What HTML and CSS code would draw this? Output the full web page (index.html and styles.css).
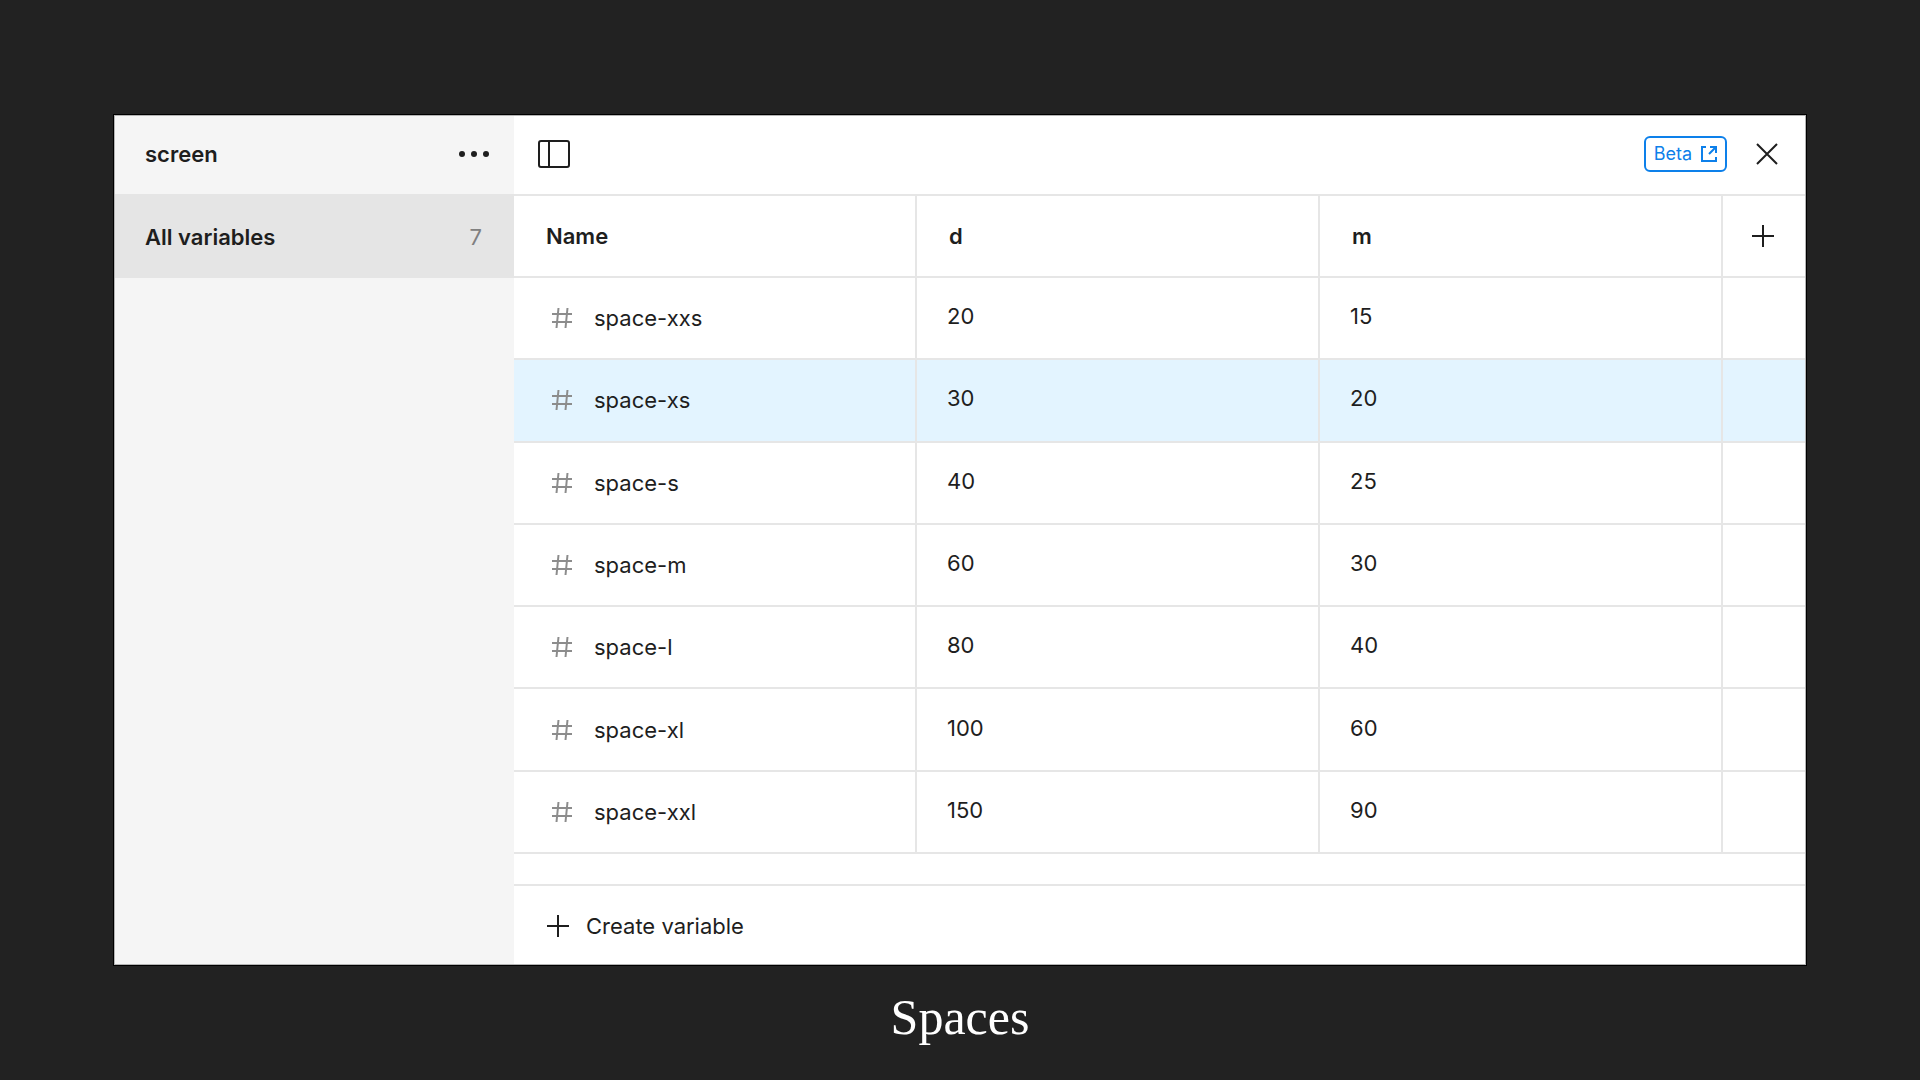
FILE: index.html
```html
<!DOCTYPE html>
<html lang="en">
<head>
<meta charset="utf-8">
<meta name="viewport" content="width=device-width, initial-scale=1">
<title>Spaces</title>
<link rel="stylesheet" href="styles.css">
</head>
<body>
<svg class="sprite" aria-hidden="true">
  <symbol id="hash" viewBox="0 0 20 22"><path d="M6.500 1 4.500 21M15.500 1 13.500 21M0 7H20M0 15H20"/></symbol>
  <symbol id="plus" viewBox="0 0 22 22"><path d="M11 0V22M0 11H22"/></symbol>
</svg>
<figure class="slide">
  <main class="panel">
    <aside class="sidebar">
      <header class="collection">
        <h1 class="title">screen</h1>
        <button class="icon-button" type="button" aria-label="More options">
          <svg class="dots" viewBox="0 0 32 8"><circle cx="4" cy="4" r="3"/><circle cx="16" cy="4" r="3"/><circle cx="28" cy="4" r="3"/></svg>
        </button>
      </header>
      <a class="group" href="#all"><span>All variables</span><span class="count">7</span></a>
    </aside>
    <section class="content">
      <header class="toolbar">
        <button class="icon-button" type="button" aria-label="Toggle sidebar">
          <svg class="layout-icon" viewBox="0 0 32 28"><rect x="1" y="1" width="30" height="26" rx="2"/><path d="M11 1V27"/></svg>
        </button>
        <div class="actions">
          <a class="beta" href="#beta">Beta
            <svg class="external" viewBox="0 0 16 16"><path d="M5 1H1V15H15V11M9 1H15V7M15 1 8 8"/></svg>
          </a>
          <button class="icon-button" type="button" aria-label="Close">
            <svg class="close" viewBox="0 0 22 22"><path d="M1 1 21 21M21 1 1 21"/></svg>
          </button>
        </div>
      </header>
      <table class="variables" id="all">
        <colgroup><col><col><col><col class="add-column"></colgroup>
        <thead>
          <tr><th scope="col">Name</th><th scope="col">d</th><th scope="col">m</th><td class="add"><button class="icon-button" type="button" aria-label="Add mode"><svg class="plus"><use href="#plus"/></svg></button></td></tr>
        </thead>
        <tbody>
          <tr><th scope="row"><div class="name"><svg class="hash"><use href="#hash"/></svg>space-xxs</div></th><td class="value">20</td><td class="value">15</td><td></td></tr>
          <tr class="selected"><th scope="row"><div class="name"><svg class="hash"><use href="#hash"/></svg>space-xs</div></th><td class="value">30</td><td class="value">20</td><td></td></tr>
          <tr><th scope="row"><div class="name"><svg class="hash"><use href="#hash"/></svg>space-s</div></th><td class="value">40</td><td class="value">25</td><td></td></tr>
          <tr><th scope="row"><div class="name"><svg class="hash"><use href="#hash"/></svg>space-m</div></th><td class="value">60</td><td class="value">30</td><td></td></tr>
          <tr><th scope="row"><div class="name"><svg class="hash"><use href="#hash"/></svg>space-l</div></th><td class="value">80</td><td class="value">40</td><td></td></tr>
          <tr><th scope="row"><div class="name"><svg class="hash"><use href="#hash"/></svg>space-xl</div></th><td class="value">100</td><td class="value">60</td><td></td></tr>
          <tr><th scope="row"><div class="name"><svg class="hash"><use href="#hash"/></svg>space-xxl</div></th><td class="value">150</td><td class="value">90</td><td></td></tr>
        </tbody>
      </table>
      <footer class="footer">
        <button class="create" type="button"><svg class="plus"><use href="#plus"/></svg>Create variable</button>
      </footer>
    </section>
  </main>
  <figcaption class="caption">Spaces</figcaption>
</figure>
</body>
</html>
```
FILE: styles.css
```css
* { box-sizing: border-box; }

body {
  margin: 0;
  min-height: 100vh;
  background: #222;
  color: #1e1e1e;
  font: 400 22px/28px Inter, sans-serif;
}

.sprite { display: none; }

svg {
  display: block;
  flex: none;
  fill: none;
  stroke: currentColor;
  stroke-width: 2;
}

button {
  padding: 0;
  border: 0;
  background: none;
  color: inherit;
  font: inherit;
  cursor: pointer;
}

.icon-button { display: block; }

a { color: inherit; text-decoration: none; }

.slide {
  margin: 0;
  padding: 115px 114px 0;
}

.panel {
  display: flex;
  border: 1px solid #b4b4b4;
  background: #fff;
  box-shadow: 0 0 0 1px #000;
}

.sidebar {
  flex: none;
  width: 399px;
  background: #f5f5f5;
}

.collection,
.group {
  display: flex;
  align-items: center;
  justify-content: space-between;
  padding: 0 24px 2px 30px;
  font-weight: 600;
}

.collection { height: 78px; }

.group {
  height: 84px;
  padding: 2px 32px 0 30px;
  background: #e5e5e5;
}

.title { margin: 0; font-size: 22px; font-weight: 600; }

.count { color: #808080; font-weight: 400; }

.dots {
  width: 32px;
  height: 8px;
  fill: currentColor;
  stroke: none;
}

.content {
  display: flex;
  flex: 1;
  flex-direction: column;
  min-width: 0;
}

.toolbar {
  display: flex;
  align-items: center;
  justify-content: space-between;
  height: 80px;
  padding: 0 27px 2px 24px;
  border-bottom: 2px solid #e6e6e6;
}

.layout-icon { width: 32px; height: 28px; }

.actions { display: flex; align-items: center; gap: 29px; }

.beta {
  display: flex;
  align-items: center;
  gap: 9px;
  height: 36px;
  padding: 0 8px;
  border: 2px solid #0d80ea;
  border-radius: 6px;
  color: #0d80ea;
  font-size: 18px;
}

.external { width: 16px; height: 16px; }

.close,
.plus { width: 22px; height: 22px; }

.variables {
  width: 100%;
  height: 658px;
  border-spacing: 0;
  table-layout: fixed;
}

.add-column { width: 82px; }

.variables thead tr { height: 82px; }

.variables th,
.variables td {
  padding: 0 32px;
  border-right: 2px solid #e6e6e6;
  border-bottom: 2px solid #e6e6e6;
  text-align: left;
  vertical-align: middle;
}

.variables th { font-weight: 600; }

.variables tbody th { font-weight: 400; }

.variables td:last-child { border-right: 0; }

.variables .value { padding: 0 30px 4px; }

.variables .add { padding: 0 29px; }

.name {
  display: flex;
  align-items: center;
  gap: 22px;
  padding-left: 6px;
}

.hash {
  width: 20px;
  height: 22px;
  color: #8c8c8c;
}

.selected { background: #e3f4ff; }

.footer {
  display: flex;
  align-items: center;
  height: 80px;
  margin-top: 30px;
  padding: 2px 33px 0;
  border-top: 2px solid #e6e6e6;
}

.create { display: flex; align-items: center; gap: 17px; }

.caption {
  padding-top: 20px;
  color: #fff;
  font: 50px/64px "Liberation Serif", serif;
  text-align: center;
}
```
